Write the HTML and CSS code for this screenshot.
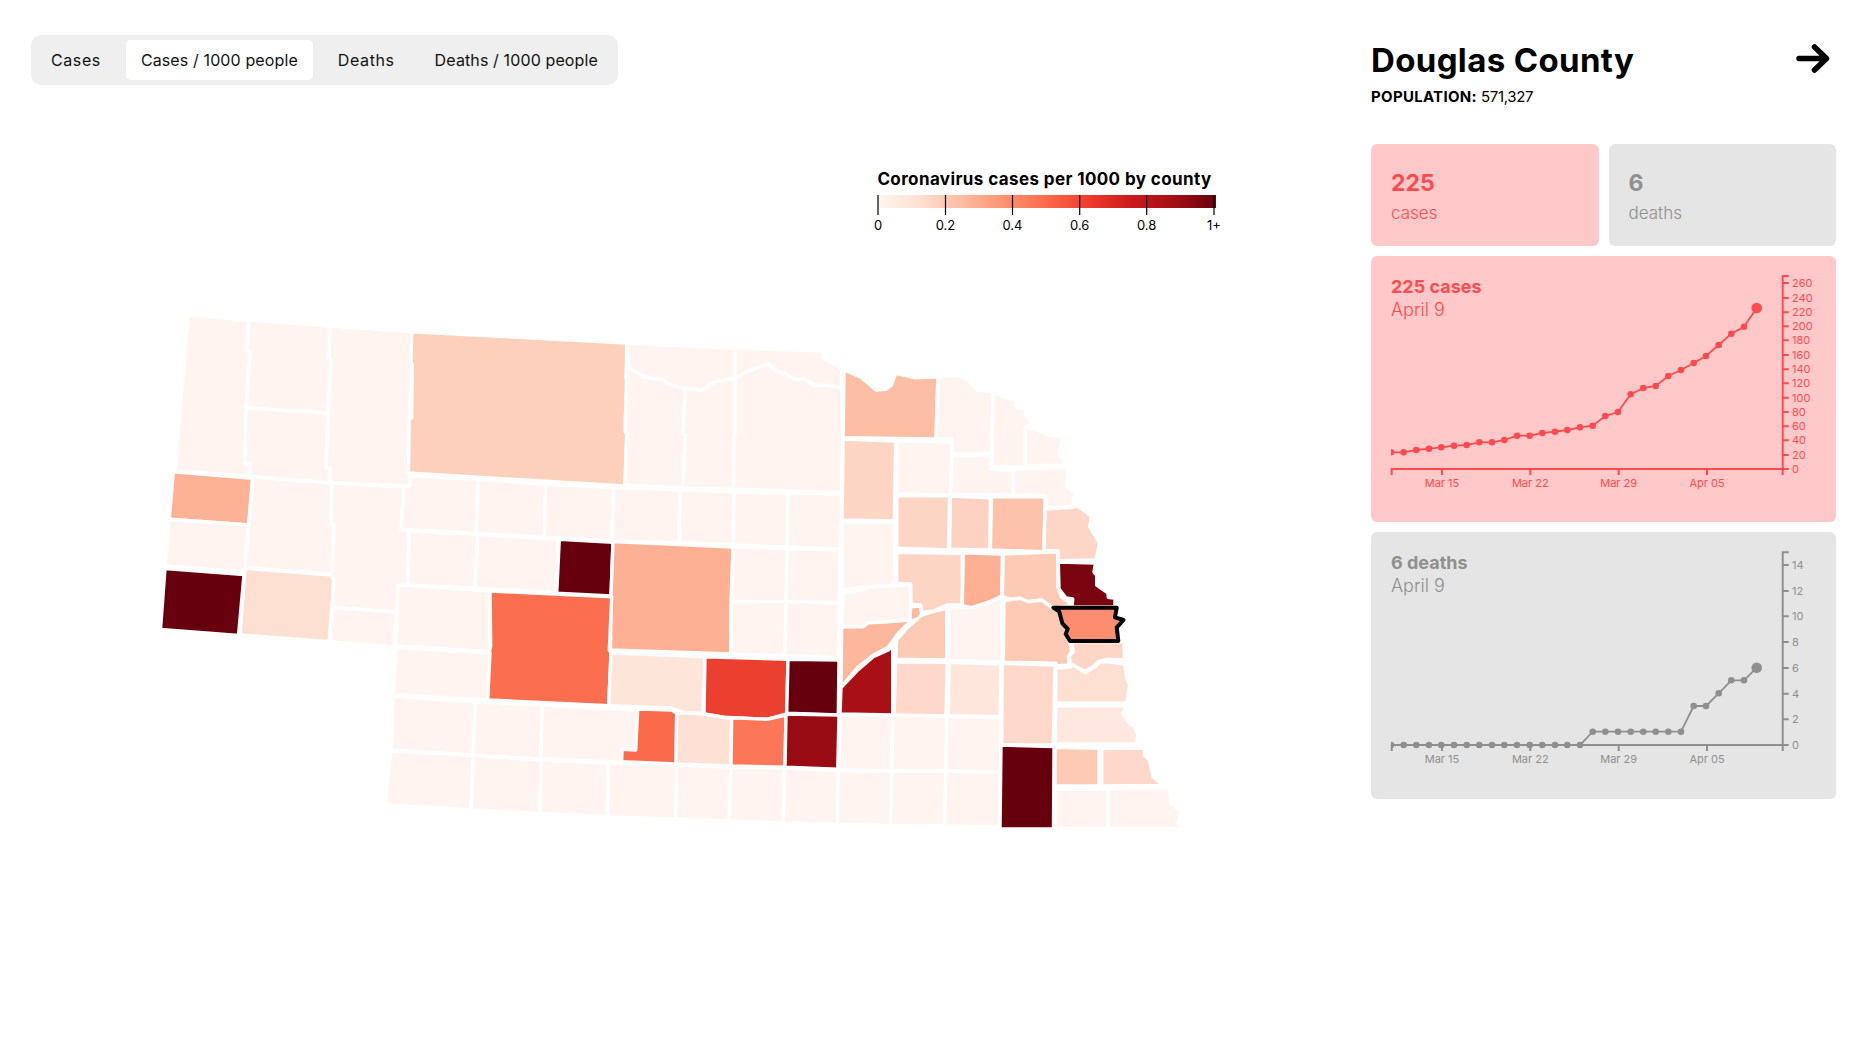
FILE: index.html
```html
<!DOCTYPE html>
<html lang="en">
<head>
<meta charset="utf-8">
<title>Coronavirus cases by county</title>
<link rel="stylesheet" href="styles.css">
</head>
<body>
<main class="app">
  <section class="map-col">
    <nav class="tabs">
      <button class="tab short">Cases</button>
      <button class="tab active">Cases / 1000 people</button>
      <button class="tab short">Deaths</button>
      <button class="tab">Deaths / 1000 people</button>
    </nav>
    <svg class="map" viewBox="31 85 1300 900" width="1300" height="900">
      <defs>
        <linearGradient id="reds">
          <stop offset="0" stop-color="#fff5f0"/>
          <stop offset="0.125" stop-color="#fee0d2"/>
          <stop offset="0.25" stop-color="#fcbba1"/>
          <stop offset="0.375" stop-color="#fc9272"/>
          <stop offset="0.5" stop-color="#fb6a4a"/>
          <stop offset="0.625" stop-color="#ef3b2c"/>
          <stop offset="0.75" stop-color="#cb181d"/>
          <stop offset="0.875" stop-color="#a50f15"/>
          <stop offset="1" stop-color="#67000d"/>
        </linearGradient>
      </defs>
      <g class="counties">
        <polygon class="l" points="188,315 248.5,320 247,351 250,352 246,408 245,463 250,464 249,476 175,471"/>
        <polygon class="l" points="248.5,320 330,326 329,359 331,360 328,413 246,408 250,352 247,351"/>
        <polygon class="l" points="246,408 328,413 326,468 330,468 330,483 250,476 250,464 245,463"/>
        <polygon class="l" points="330,326 411.7,331.7 411,363 412.3,364 409.3,417.3 411.7,418 409,473 410.7,475 410,486 330,483 330,468 326,468 328,413 331,360 329,359"/>
        <polygon class="c-cherry" points="411.7,331.7 627,343 626,378 627,378 625.7,432 627,433 625,486 408.5,473 409.3,417.3 411.7,418 412.3,364 411,363"/>
        <polygon class="c-banner" points="173.3,471.7 252.7,478.3 248.7,525 169.3,519.3"/>
        <polygon class="l" points="169.3,519.3 248.7,525 244,572 165,566"/>
        <polygon class="d" points="165,568.5 244,574.5 238.5,635.5 160.5,629.5"/>
        <polygon class="l" points="252.7,477.3 332,483 331,524 334,525 331.7,574.3 245,567.7"/>
        <polygon class="c-cheyenne" points="245,568.3 331.7,575 333.7,580 329.3,641.7 240,635"/>
        <polygon class="l" points="332,483 404,487 400.7,530 409.3,531 407.7,585 398.3,585 396,612 332.5,607.5 333.7,580 331.7,575 334,525 331,524"/>
        <polygon class="l" points="332.5,607.5 396,612 394.3,646.7 329.3,641.7"/>
        <polygon class="l" points="410,476 478.3,479.3 476,533.3 401,529.3 404,488 410,486"/>
        <polygon class="l" points="478.3,479.3 545.7,484.3 544.3,537.3 476,533.3"/>
        <polygon class="l" points="545.7,484.3 613.3,487.3 611.7,541 544.3,537.3"/>
        <polygon class="l" points="613.3,487.3 680,490 679,542.7 611.7,541"/>
        <polygon class="l" points="680,490 734,491.7 733,545 679,542.7"/>
        <polygon class="l" points="734,491.7 788,493.3 787.3,547 733,545"/>
        <polygon class="l" points="788,493.3 842,494 840.7,549 787.3,547"/>
        <polygon class="l" points="409.3,531 477.7,534.5 475,588.3 407.7,585"/>
        <polygon class="l" points="477.7,534.5 558.3,539.3 556,592.3 475,588.3"/>
        <polygon class="d" points="559.3,539.3 613,542.3 611,596 556.7,593.3"/>
        <polygon class="c-custer" points="613,541.5 733,547 731,602.7 731,654 610.5,650 611,596"/>
        <polygon class="l" points="733,547 787.5,548.5 786,601.5 731.5,601.7"/>
        <polygon class="l" points="787.5,548.5 840,550 839.3,603 786,601.5"/>
        <polygon class="l" points="731.5,601.7 786,601.5 785,655.5 730.7,654.3"/>
        <polygon class="l" points="786,601.5 839.3,603 838.3,658 785,655.5"/>
        <polygon class="l" points="398,585 491.3,591 489.3,645 491.7,646 490,651.7 396,646"/>
        <polygon class="c-lincoln" points="490,591 611.7,596.7 609.3,650 611,652.7 608.7,705.7 487.2,700 489.3,651.7 490.7,646"/>
        <polygon class="l" points="396,647.3 490,652.7 487.7,700 393.3,695"/>
        <polygon class="c-pale" points="611,652.7 705,656.7 702.7,713.3 683.3,712.7 671.7,708.3 608.7,705.7"/>
        <polygon class="c-red" points="705,656.7 788,659.3 786.7,714 766.7,719.3 733.3,717.7 723.3,717.3 704,714"/>
        <polygon class="d" points="788,659.3 839,660 838.3,715 786.7,713.3"/>
        <polygon class="l" points="393.3,696 475,701.7 473.3,755 390.7,750"/>
        <polygon class="l" points="475,701.7 542.3,705 540.7,759 473.3,755"/>
        <polygon class="l" points="542.3,705 638,710 636,750 622,749.3 621,762.3 540.7,759"/>
        <polygon class="c-hayes" points="637.7,709 671.7,710 676.7,713.3 676,764 621.7,761.7 622,749.3 635.7,750"/>
        <polygon class="c-pale2" points="676.7,714 683.3,712.7 704,714 723.3,717.3 731.7,718.3 731,766 676,764"/>
        <polygon class="c-orange" points="731.7,718 733.3,717.7 766.7,719.3 786,715 785,767.3 731,766"/>
        <polygon class="c-dark2" points="786,714 839,715 837.7,769.3 785,767.3"/>
        <polygon class="l" points="390.7,751 473.3,755.5 471,810 386,805"/>
        <polygon class="l" points="473.3,755.5 541,760 540,813.5 471,810"/>
        <polygon class="l" points="541,760 608.3,763 607.3,817 540,813.5"/>
        <polygon class="l" points="608.3,763 676.7,765 675.7,819 607.3,817"/>
        <polygon class="l" points="676.7,765 730.7,767 729.3,821 675.7,819"/>
        <polygon class="l" points="730.7,767 784.3,768 783.3,823 729.3,821"/>
        <polygon class="l" points="784.3,768 838.3,770.7 837.7,824.3 783.3,823"/>
        <polygon class="l" points="838.3,770.7 891.7,771 891,825.5 837.5,824.5"/>
        <polygon class="l" points="891.7,771 945.7,771 945,826 891,825.5"/>
        <polygon class="l" points="945.7,771 1000.7,772 1000,827 945,826"/>
        <polygon class="l" points="840,715 892.7,715 891.7,771 838.7,770"/>
        <polygon class="l" points="892.7,715 947,716 945.7,771 891.7,771"/>
        <polygon class="l" points="947,716 1001,717 1000.7,772 945.7,771"/>
        <polygon class="l" points="626.7,343 735,348.3 735,378.3 715,381.7 701.7,390 683.3,388.3 666.7,383.3 663.3,380 650,378 643.3,376.7 627.7,366.7"/>
        <polygon class="l" points="735,348.3 823.3,351 823.3,358 841.7,368.3 841.7,388.3 830,386 813.3,385 805,379.3 795,379 785,373.3 776.7,371.7 768.3,363.3 758.3,367.7 746.7,371.7 735,378.3"/>
        <polygon class="l" points="627.7,366.7 643.3,376.7 650,378 663.3,380 666.7,383.3 683.3,388.3 685,388.3 683.3,433.3 685,435 683.3,488.3 625,485 626.7,431.7 625,431.7 626.7,373"/>
        <polygon class="l" points="685,389 701.7,390 715,381.7 735,378.3 735,436.7 734,436.7 733.3,489.3 683.3,488.3 685,435 683.3,433.3"/>
        <polygon class="l" points="735,378.3 746.7,371.7 758.3,367.7 768.3,363.3 776.7,371.7 785,373.3 795,379 805,379.3 813.3,385 830,386 841.7,388.3 842.7,437.3 841.7,492.7 733.3,489.3 734,436.7 735,436.7"/>
        <polygon class="c-rock" points="844,370 861,377.3 876,390 886,389.3 891.4,385 895.7,373.3 914.6,377.7 937.9,376.7 936,439 843.2,437.7"/>
        <polygon class="c-loup" points="843.2,439 895.7,441 894.3,521 842,520"/>
        <polygon class="l" points="842,521.7 894.3,521.7 895,585 863,587.3 842,590"/>
        <polygon class="l" points="843.3,593.3 863.3,589.3 871.7,586.7 890,585.7 910.7,584.3 910.7,620 888.3,621.7 868.3,622.7 863.3,626.7 841.7,626.7"/>
        <polygon class="c-buff" points="841.7,626.7 863.3,626.7 868.3,622.7 888.3,621.7 910,620 910.7,606.7 920.7,606 921.7,617.3 910,621.7 898.3,633.3 888.3,647.3 873.3,655 856.7,668.3 841,687.7"/>
        <polygon class="c-dark3" points="841,687.7 856.7,671 873.3,656.7 888.3,650 892.7,646 892.7,715 840,714"/>
        <polygon class="l" points="938,376.7 957.5,375 968.2,380 977,390 993.2,391.7 991.4,453.3 952,454 952,439 936,439"/>
        <polygon class="l" points="993.2,391.7 1004,396.7 1014.6,400 1016.4,407.3 1027,408.3 1025,415 1034.3,425 1025.4,426.7 1025.4,467.3 991.4,467.3"/>
        <polygon class="l" points="1025.4,426.7 1036,430 1048.6,435 1062.9,436.7 1059,453.3 1066.4,465 1025.4,466"/>
        <polygon class="l" points="896.8,441 951.4,441.7 952,454 950.4,495 896.8,494"/>
        <polygon class="l" points="952,455 990.7,455 990.7,469.3 1012.9,470 1012.9,495 950.4,494.3"/>
        <polygon class="l" points="1012.9,469.3 1066.4,467.3 1068.2,476.7 1066.4,485 1075.4,493.3 1071.8,506.7 1046.8,508.3 1045,495.7 1012.9,495"/>
        <polygon class="c-p1" points="896.8,495.7 949.6,495.7 948.6,550 896.8,548.3"/>
        <polygon class="c-p2" points="950.4,496 990.4,497.7 989.6,550 949.6,549.3"/>
        <polygon class="c-p3" points="991.4,496.7 1045,496.7 1044,551.7 990.4,550"/>
        <polygon class="c-p4" points="1045,509 1073.6,507.3 1075.4,505 1086,511.7 1091.4,516.7 1089.6,526.7 1099.5,543.3 1096,560 1058.6,560.7 1057.9,550.7 1044,550.7"/>
        <polygon class="c-p1" points="896.7,552.3 962.3,553.3 962.3,605 946.7,605 933.3,611 921.7,612.7 920.7,605 911,604.3 910.7,584.3 896.7,583.3"/>
        <polygon class="c-custer" points="963.3,552.7 1002.3,554 1001.7,596 990,601.7 971.7,607.7 962.3,605.7"/>
        <polygon class="c-p5" points="1003.3,554 1057.7,551.7 1057.7,586.7 1061.7,597.3 1068.3,601.7 1070,605.7 1053.3,608.3 1041.7,600 1028.3,601.7 1020,598.3 1011.7,599.3 1002.3,596.7"/>
        <polygon class="c-dodge" points="1058.3,562 1095.5,563 1094,572 1096.7,575 1096.7,585 1106.7,592 1107.5,586 1108.3,597.3 1115,598.3 1115,607 1072,607 1072.7,599 1066,598 1063.7,595 1059,589"/>
        <polygon class="c-p4" points="1071.7,641.7 1124,641.7 1124.5,660 1106.7,659.3 1098.3,661.7 1093.3,666.7 1085,671 1075,666.7 1070.7,664 1069,656.7 1073.3,651.7"/>
        <polygon class="c-p5" points="1004,601 1011.7,599.3 1020,598.3 1028.3,601.7 1041.7,600 1053,608.3 1059.3,611.7 1062.3,623.3 1067.7,629 1065.7,634 1069.3,641 1071.7,651.7 1068.3,656.7 1069.3,665 1056,666 1056,663.3 1003.3,662.3"/>
        <polygon class="l" points="949,606.7 960,606.7 971.7,608 990,602.3 1001.7,597.3 1002.3,662.3 948.3,660.7"/>
        <polygon class="c-p5" points="946.7,608.3 946.7,660 895.7,659.3 896.7,640 906.7,628.3 921.7,615 933,611.7"/>
        <polygon class="c-p6" points="895.7,661.7 947.3,662.3 946,716 894,715"/>
        <polygon class="c-p7" points="949,662.3 1001,664 1000,716.7 948.3,715.7"/>
        <polygon class="c-p6" points="1002.3,663.3 1055,665 1053.3,745 1001.7,745"/>
        <polygon class="c-p8" points="1055.7,668.3 1070,666.7 1073.3,665 1085,672.7 1095,666.7 1100,661.7 1108.3,661.7 1124.5,664 1126,675 1129.5,685 1127,703.3 1055.7,703.3"/>
        <polygon class="c-p9" points="1055.7,705.7 1127,705.7 1122.7,713.3 1129.3,723.3 1134.5,726.7 1138,735 1136.5,744 1055,744"/>
        <polygon class="d" points="1001,745 1054,746.5 1053.5,829 1000,829"/>
        <polygon class="c-p5" points="1055,747.3 1099,748.3 1099,786 1055,786"/>
        <polygon class="c-p6" points="1101.7,748 1144.5,748.3 1144.5,755 1149.5,760 1153,776.7 1163,785.5 1101.7,786"/>
        <polygon class="l" points="1055,789 1107.7,789 1107.7,828.5 1055,828.5"/>
        <polygon class="l" points="1108.3,789 1169.5,788.3 1171,803.3 1181,811.7 1178,823.3 1189,828.5 1108.3,828.5"/>
      </g>
      <polygon class="selected" points="1053.3,607.7 1116.7,607.7 1115,617.3 1123.5,620 1116.7,627.3 1118.3,641 1070,641 1065.7,634 1067.7,629 1062.3,623.3 1059.3,611.7"/>
      <g class="legend">
        <text class="legend-title" x="1044.5" y="185">Coronavirus cases per 1000 by county</text>
        <rect class="legend-bar" x="878" y="195" width="338" height="13"/>
        <path class="legend-ticks" d="M878 195V215M945.5 195V215M1012.5 195V215M1079.7 195V215M1146.7 195V215M1214 195V215"/>
        <text class="legend-label" x="878" y="230">0</text>
        <text class="legend-label" x="945.5" y="230">0.2</text>
        <text class="legend-label" x="1012.5" y="230">0.4</text>
        <text class="legend-label" x="1079.7" y="230">0.6</text>
        <text class="legend-label" x="1146.7" y="230">0.8</text>
        <text class="legend-label" x="1214" y="230">1+</text>
      </g>
    </svg>
  </section>
  <aside class="panel">
    <header class="panel-head">
      <div>
        <h1 class="county">Douglas County</h1>
        <p class="pop"><strong>POPULATION:</strong> <span class="pop-value">571,327</span></p>
      </div>
      <svg class="arrow" viewBox="0 0 34 30" width="34" height="30">
        <path d="M3 14.5H30M18.5 3L30.5 14.5L18.5 26"/>
      </svg>
    </header>
    <div class="stats">
      <div class="card red stat"><b class="num">225</b><span class="lab">cases</span></div>
      <div class="card gray stat"><b class="num">6</b><span class="lab">deaths</span></div>
    </div>
    <div class="card red chart">
      <div class="chart-text"><b>225 cases</b><span>April 9</span></div>
      <svg class="plot" viewBox="1371 256 465 266" width="465" height="266">
        <defs><clipPath id="clip1"><rect x="1391" y="256" width="420" height="266"/></clipPath></defs>
        <path class="axis" d="M1391.7 475V469H1782.7V475M1442 469V475M1530.3 469V475M1618.7 469V475M1707 469V475"/>
        <path class="axis" d="M1788.7 276H1782.7V469H1788.7M1782.7 455H1788.7M1782.7 440.3H1788.7M1782.7 426.3H1788.7M1782.7 412H1788.7M1782.7 397.7H1788.7M1782.7 383.3H1788.7M1782.7 369.3H1788.7M1782.7 355H1788.7M1782.7 340.3H1788.7M1782.7 326.3H1788.7M1782.7 312.3H1788.7M1782.7 298H1788.7M1782.7 283H1788.7"/>
        <g class="tx"><text x="1442" y="487">Mar 15</text><text x="1530.3" y="487">Mar 22</text><text x="1618.7" y="487">Mar 29</text><text x="1707" y="487">Apr 05</text></g>
        <g class="ty">
          <text x="1792" y="473">0</text><text x="1792" y="459">20</text><text x="1792" y="444.3">40</text><text x="1792" y="430.3">60</text><text x="1792" y="416">80</text><text x="1792" y="401.7">100</text><text x="1792" y="387.3">120</text><text x="1792" y="373.3">140</text><text x="1792" y="359">160</text><text x="1792" y="344.3">180</text><text x="1792" y="330.3">200</text><text x="1792" y="316.3">220</text><text x="1792" y="302">240</text><text x="1792" y="287">260</text>
        </g>
        <g clip-path="url(#clip1)">
          <polyline class="line" points="1391,452.3 1403.7,452.3 1416.3,450 1429,448.7 1441.3,447.3 1454,445.7 1466.7,445 1479.3,442.3 1492,442.3 1504.3,440 1517,435.7 1529.7,435.7 1542.3,433 1555,431.7 1567.3,430 1580,427.3 1592.7,425.7 1605.3,416 1618,412 1630.7,394.3 1643.3,388 1655.7,386 1668.3,376 1681,370 1693.7,363 1706,356 1718.7,345 1731.3,333.7 1744,326.7 1756.7,308"/>
          <g class="dots">
            <circle cx="1391" cy="452.3" r="3.3"/><circle cx="1403.7" cy="452.3" r="3.3"/><circle cx="1416.3" cy="450" r="3.3"/><circle cx="1429" cy="448.7" r="3.3"/><circle cx="1441.3" cy="447.3" r="3.3"/><circle cx="1454" cy="445.7" r="3.3"/><circle cx="1466.7" cy="445" r="3.3"/><circle cx="1479.3" cy="442.3" r="3.3"/><circle cx="1492" cy="442.3" r="3.3"/><circle cx="1504.3" cy="440" r="3.3"/><circle cx="1517" cy="435.7" r="3.3"/><circle cx="1529.7" cy="435.7" r="3.3"/><circle cx="1542.3" cy="433" r="3.3"/><circle cx="1555" cy="431.7" r="3.3"/><circle cx="1567.3" cy="430" r="3.3"/><circle cx="1580" cy="427.3" r="3.3"/><circle cx="1592.7" cy="425.7" r="3.3"/><circle cx="1605.3" cy="416" r="3.3"/><circle cx="1618" cy="412" r="3.3"/><circle cx="1630.7" cy="394.3" r="3.3"/><circle cx="1643.3" cy="388" r="3.3"/><circle cx="1655.7" cy="386" r="3.3"/><circle cx="1668.3" cy="376" r="3.3"/><circle cx="1681" cy="370" r="3.3"/><circle cx="1693.7" cy="363" r="3.3"/><circle cx="1706" cy="356" r="3.3"/><circle cx="1718.7" cy="345" r="3.3"/><circle cx="1731.3" cy="333.7" r="3.3"/><circle cx="1744" cy="326.7" r="3.3"/><circle cx="1756.7" cy="308" r="5.3"/>
          </g>
        </g>
      </svg>
    </div>
    <div class="card gray chart">
      <div class="chart-text"><b>6 deaths</b><span>April 9</span></div>
      <svg class="plot" viewBox="1371 532 465 267" width="465" height="267">
        <defs><clipPath id="clip2"><rect x="1391" y="532" width="420" height="267"/></clipPath></defs>
        <path class="axis" d="M1391.7 751V745H1782.7V751M1442 745V751M1530.3 745V751M1618.7 745V751M1707 745V751"/>
        <path class="axis" d="M1788.7 552.3H1782.7V745H1788.7M1782.7 719.3H1788.7M1782.7 693.7H1788.7M1782.7 668H1788.7M1782.7 642H1788.7M1782.7 616.3H1788.7M1782.7 591H1788.7M1782.7 565H1788.7"/>
        <g class="tx"><text x="1442" y="763">Mar 15</text><text x="1530.3" y="763">Mar 22</text><text x="1618.7" y="763">Mar 29</text><text x="1707" y="763">Apr 05</text></g>
        <g class="ty">
          <text x="1792" y="749">0</text><text x="1792" y="723.3">2</text><text x="1792" y="697.7">4</text><text x="1792" y="672">6</text><text x="1792" y="646">8</text><text x="1792" y="620.3">10</text><text x="1792" y="595">12</text><text x="1792" y="569">14</text>
        </g>
        <g clip-path="url(#clip2)">
          <polyline class="line" points="1391,745 1580,745 1592.7,731.7 1681,731.7 1693.7,706 1706,706 1718.7,693.3 1731.3,680.3 1744,680.3 1756.7,667.7"/>
          <g class="dots">
            <circle cx="1391" cy="745" r="3.3"/><circle cx="1403.7" cy="745" r="3.3"/><circle cx="1416.3" cy="745" r="3.3"/><circle cx="1429" cy="745" r="3.3"/><circle cx="1441.3" cy="745" r="3.3"/><circle cx="1454" cy="745" r="3.3"/><circle cx="1466.7" cy="745" r="3.3"/><circle cx="1479.3" cy="745" r="3.3"/><circle cx="1492" cy="745" r="3.3"/><circle cx="1504.3" cy="745" r="3.3"/><circle cx="1517" cy="745" r="3.3"/><circle cx="1529.7" cy="745" r="3.3"/><circle cx="1542.3" cy="745" r="3.3"/><circle cx="1555" cy="745" r="3.3"/><circle cx="1567.3" cy="745" r="3.3"/><circle cx="1580" cy="745" r="3.3"/><circle cx="1592.7" cy="731.7" r="3.3"/><circle cx="1605.3" cy="731.7" r="3.3"/><circle cx="1618" cy="731.7" r="3.3"/><circle cx="1630.7" cy="731.7" r="3.3"/><circle cx="1643.3" cy="731.7" r="3.3"/><circle cx="1655.7" cy="731.7" r="3.3"/><circle cx="1668.3" cy="731.7" r="3.3"/><circle cx="1681" cy="731.7" r="3.3"/><circle cx="1693.7" cy="706" r="3.3"/><circle cx="1706" cy="706" r="3.3"/><circle cx="1718.7" cy="693.3" r="3.3"/><circle cx="1731.3" cy="680.3" r="3.3"/><circle cx="1744" cy="680.3" r="3.3"/><circle cx="1756.7" cy="667.7" r="5.3"/>
          </g>
        </g>
      </svg>
    </div>
  </aside>
</main>
</body>
</html>
```

FILE: styles.css
```css
* { box-sizing: border-box; }
html, body { margin: 0; padding: 0; background: #fff; }
body { font-family: Inter, "Liberation Sans", sans-serif; color: #000; }

.app {
  display: flex;
  justify-content: space-between;
  height: 1038px;
  padding: 35px 39px 0 31px;
  overflow: hidden;
}

.map-col { width: 1300px; flex: none; }

.tabs {
  display: inline-flex;
  gap: 10px;
  padding: 5px;
  height: 50px;
  width: 587px;
  background: #efefef;
  border-radius: 10px;
}
.tab {
  border: 0;
  background: transparent;
  font: 400 16px/40px Inter, sans-serif;
  letter-spacing: 0.12px;
  color: #111;
  padding: 0 15px;
  border-radius: 5px;
  white-space: nowrap;
  flex: none;
}
.tab.short { letter-spacing: 0.6px; }
.tab.active { background: #fff; }

.map { display: block; }
.counties polygon { stroke: #fff; stroke-width: 3.4; stroke-linejoin: round; }
.l { fill: #fff4ef; }
.d { fill: #67000d; }
.c-cherry { fill: #fdd0bc; }
.c-banner { fill: #fdb195; }
.c-cheyenne { fill: #fee0d2; }
.c-custer { fill: #fdb094; }
.c-lincoln { fill: #fc6e50; }
.c-pale { fill: #fee5da; }
.c-pale2 { fill: #fee1d4; }
.c-red { fill: #eb3f2f; }
.c-hayes { fill: #fb6a4a; }
.c-orange { fill: #fc7757; }
.c-dark2 { fill: #9a0c14; }
.c-dark3 { fill: #a81016; }
.c-rock { fill: #fcbea5; }
.c-loup { fill: #fdd5c5; }
.c-buff { fill: #fdb79c; }
.c-dodge { fill: #7a0510; }
.c-p1 { fill: #fdd5c5; }
.c-p2 { fill: #fdd2c2; }
.c-p3 { fill: #fdc2ab; }
.c-p4 { fill: #fdd6c7; }
.c-p5 { fill: #fdcab5; }
.c-p6 { fill: #fed9cb; }
.c-p7 { fill: #fee6dc; }
.c-p8 { fill: #fee0d3; }
.c-p9 { fill: #fee8df; }
.selected { fill: #fc8d6e; stroke: #000; stroke-width: 4; stroke-linejoin: round; }

.legend-title { font: 700 17px Inter, sans-serif; letter-spacing: 0.4px; text-anchor: middle; fill: #000; }
.legend-bar { fill: url(#reds); }
.legend-ticks { stroke: #000; stroke-width: 1.2; fill: none; }
.legend-label { font: 400 13px Inter, sans-serif; text-anchor: middle; fill: #000; }

.panel { width: 465px; flex: none; }
.panel-head {
  display: flex;
  justify-content: space-between;
  align-items: flex-start;
  height: 109px;
}
.county {
  margin: 1px 0 0;
  font: 700 33px/48px Inter, sans-serif;
  letter-spacing: 0.35px;
}
.pop {
  margin: 3px 0 0;
  font: 400 15px/20px Inter, sans-serif;
}
.pop strong { font-weight: 700; letter-spacing: 0.3px; }
.pop-value { letter-spacing: -0.35px; }
.arrow { margin: 9px 6px 0 0; }
.arrow path { fill: none; stroke: #000; stroke-width: 5.5; stroke-linecap: round; stroke-linejoin: round; }

.stats { display: flex; gap: 10px; margin-bottom: 10px; }
.card { border-radius: 6px; }
.red { background: #ffc9c9; color: #ff4b4f; }
.gray { background: #e5e5e5; color: #8f8f8f; }
.stat {
  flex: 1;
  height: 102px;
  padding: 21px 20px 0;
  display: flex;
  flex-direction: column;
}
.num { font: 700 23px/36px Inter, sans-serif; }
.lab { font: 300 17px/24px Inter, sans-serif; }

.chart { display: grid; margin-bottom: 10px; }
.chart-text, .plot { grid-area: 1 / 1; }
.chart-text {
  padding: 19px 20px 0;
  display: flex;
  flex-direction: column;
  font: 300 18px/23px Inter, sans-serif;
}
.chart-text b { font-weight: 700; }
.plot { display: block; }
.axis { fill: none; stroke: currentColor; stroke-width: 2; }
.line { fill: none; stroke: currentColor; stroke-width: 1.8; }
.dots { fill: currentColor; }
.tx text { font: 400 11px Inter, sans-serif; text-anchor: middle; fill: currentColor; }
.ty text { font: 400 11px Inter, sans-serif; fill: currentColor; }
```
